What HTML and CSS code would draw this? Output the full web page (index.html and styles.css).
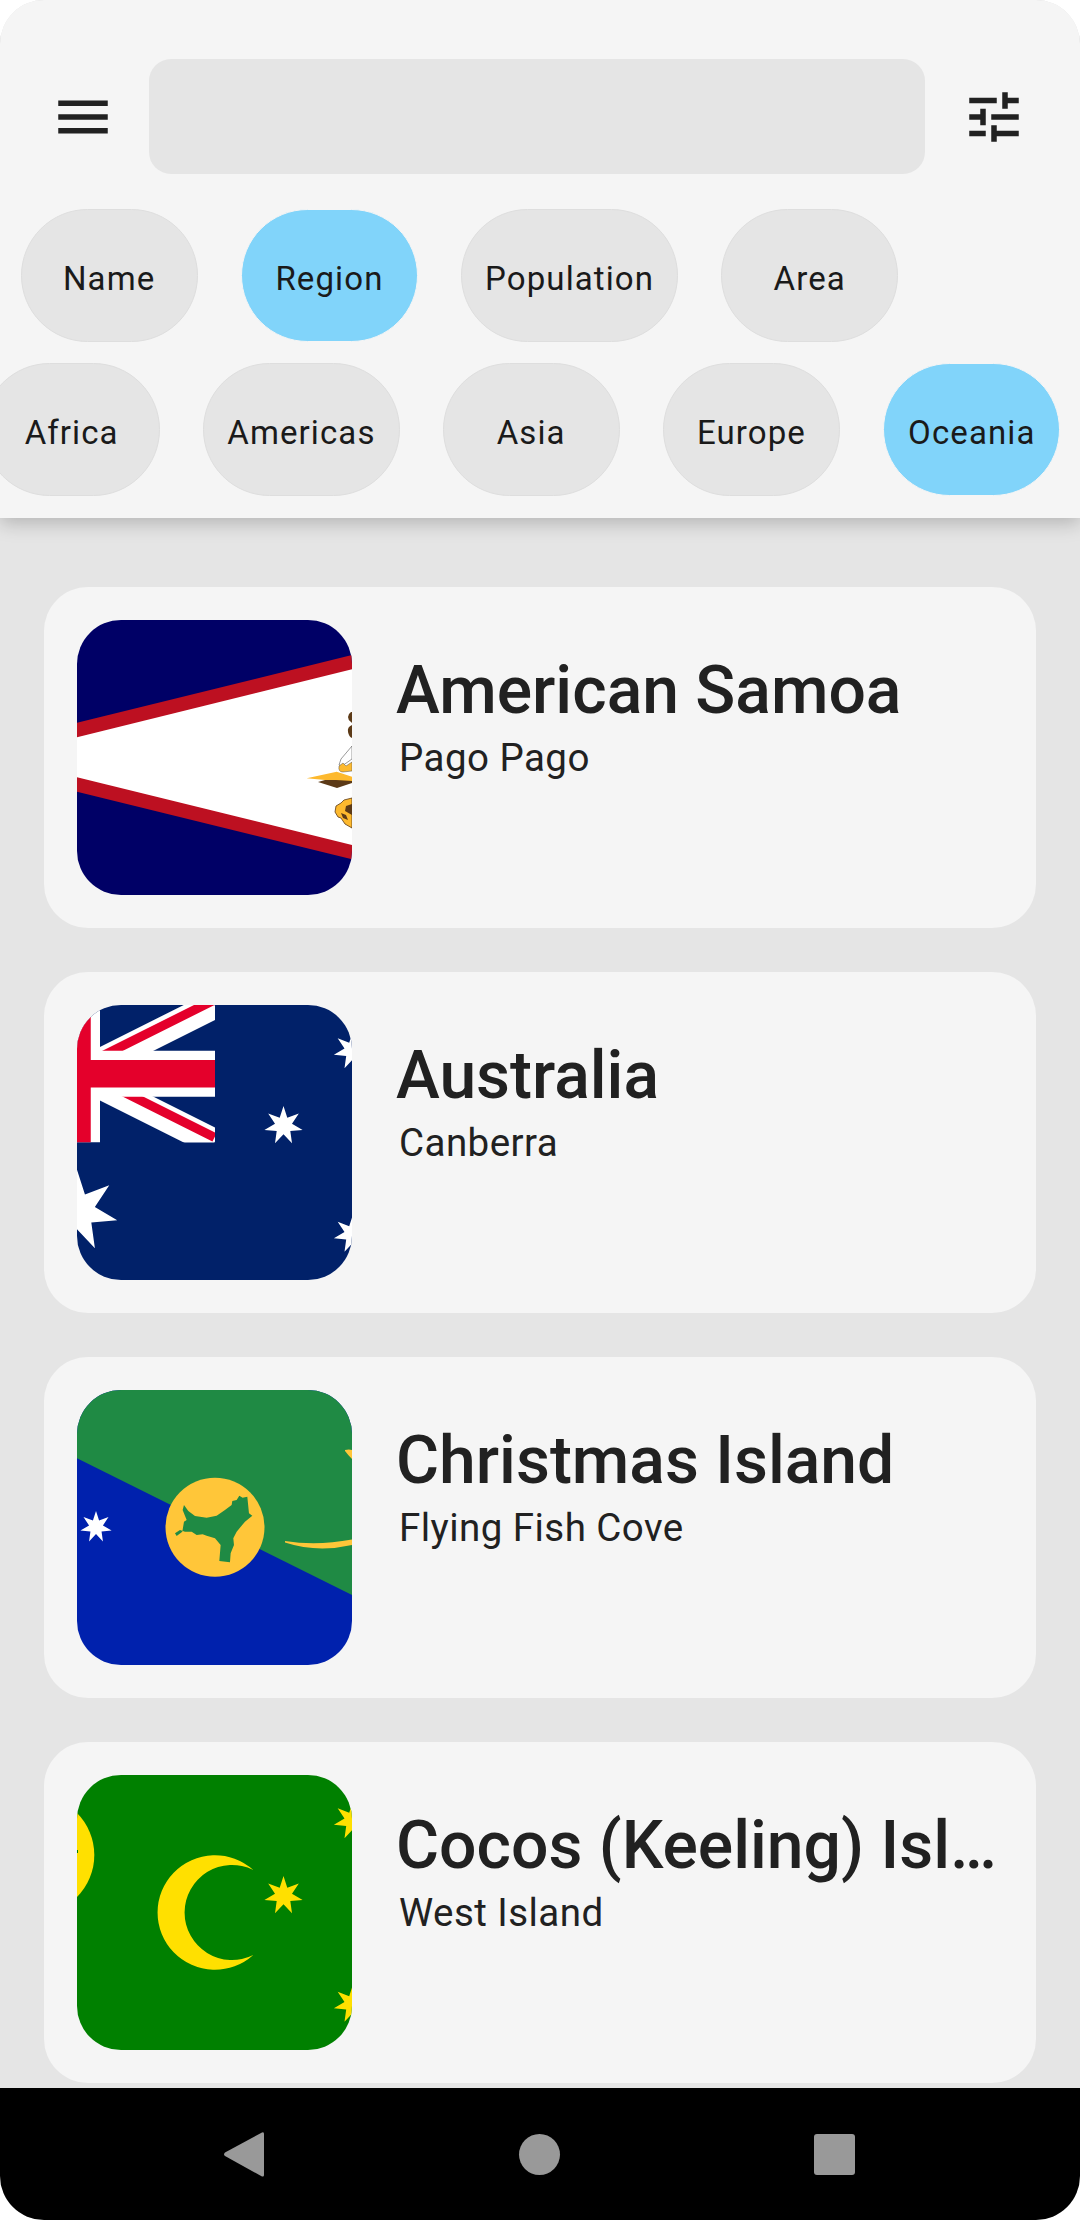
FILE: index.html
```html
<!DOCTYPE html>
<html lang="en">
<head>
    <meta charset="UTF-8">
    <meta name="viewport" content="width=device-width, initial-scale=1.0">
    <title>Countries</title>
    <link rel="stylesheet" href="styles.css">
</head>
<body>
    <svg class="svg-defs">
        <defs>
            <polygon id="star7" points="0,-100 19.3,-40 78.2,-62.3 43.3,-9.9 97.5,22.3 34.7,27.7 43.4,90.1 0,44.4 -43.4,90.1 -34.7,27.7 -97.5,22.3 -43.3,-9.9 -78.2,-62.3 -19.3,-40"/>
        </defs>
    </svg>

    <div class="screen">
        <header class="top">
            <div class="search-row">
                <button class="icon-btn">
                    <svg viewBox="0 0 24 24"><path d="M3 18h18v-2H3v2zm0-5h18v-2H3v2zm0-7v2h18V6H3z"/></svg>
                </button>
                <div class="search"></div>
                <button class="icon-btn">
                    <svg viewBox="0 0 24 24"><path d="M3 17v2h6v-2H3zM3 5v2h10V5H3zm10 16v-2h8v-2h-8v-2h-2v6h2zM7 9v2H3v2h4v2h2V9H7zm14 4v-2H11v2h10zm-6-4h2V7h4V5h-4V3h-2v6z"/></svg>
                </button>
            </div>
            <div class="chips chips-sort">
                <span class="chip">Name</span>
                <span class="chip selected">Region</span>
                <span class="chip">Population</span>
                <span class="chip">Area</span>
            </div>
            <div class="chips chips-region">
                <span class="chip">Africa</span>
                <span class="chip">Americas</span>
                <span class="chip">Asia</span>
                <span class="chip">Europe</span>
                <span class="chip selected">Oceania</span>
            </div>
        </header>

        <main class="list">
            <article class="card">
                <svg class="flag" viewBox="0 0 275 275">
                    <rect width="275" height="275" fill="#006"/>
                    <polygon points="0,102.7 275,35 275,239.3 0,171.7" fill="#bd1021"/>
                    <polygon points="0,117.3 275,49.3 275,225 0,157.3" fill="#fff"/>
                    <path d="M274 92q-3 2-3 5t3 5l1 1v-11zM275 105q-5 2-4 7t4 6z" fill="#5c3a17"/>
                    <path d="M275 126l-11 13-2 6 3 1 10-7z" fill="#fff" stroke="#555" stroke-width=".6"/>
                    <path d="M262 146l4-3 3 3 6-4v9l-9 1q-5 0-4-6z" fill="#fdb92e" stroke="#555" stroke-width=".5"/>
                    <polygon points="241,162 260,168 275,163 275,158 255,158" fill="#5c3a17"/>
                    <polygon points="229.7,158.3 259.7,151.7 275,156.7 275,161 259,160 248,160" fill="#fdb92e"/>
                    <path d="M275 178l-8 2-3 3-5 3-1 6 3 5 3 1 4 6 7 4z" fill="#fdb92e" stroke="#5c3a17" stroke-width=".8"/>
                    <path d="M275 184l-6 2-1 5 7 4zM264 193l5 2 2 5-5-2z" fill="#5c3a17"/>
                </svg>
                <div class="info">
                    <h2 class="name">American Samoa</h2>
                    <p class="capital">Pago Pago</p>
                </div>
            </article>

            <article class="card">
                <svg class="flag" viewBox="0 0 275 275">
                    <rect width="275" height="275" fill="#012169"/>
                    <svg width="138" height="137.5" viewBox="0 0 138 137.5">
                        <path d="M0 68.75L137.5 0M0 68.75L137.5 137.5" stroke="#fff" stroke-width="27.5"/>
                        <path d="M0 63.63L137.5 -5.12M0 63.63L137.5 132.38" stroke="#e4002b" stroke-width="9.17"/>
                        <path d="M0 0V137.5M0 68.75H138" stroke="#fff" stroke-width="46"/>
                        <path d="M0 0V137.5M0 68.75H138" stroke="#e4002b" stroke-width="27.5"/>
                    </svg>
                    <g fill="#fff">
                        <use href="#star7" transform="translate(0 206) scale(.4125)"/>
                        <use href="#star7" transform="translate(206.5 120.6) scale(.196)"/>
                        <use href="#star7" transform="translate(276 45.5) scale(.196)"/>
                        <use href="#star7" transform="translate(276 229) scale(.196)"/>
                    </g>
                </svg>
                <div class="info">
                    <h2 class="name">Australia</h2>
                    <p class="capital">Canberra</p>
                </div>
            </article>

            <article class="card">
                <svg class="flag" viewBox="0 0 275 275">
                    <rect width="275" height="275" fill="#0021ad"/>
                    <polygon points="0,68.3 0,0 275,0 275,205" fill="#1f8a44"/>
                    <circle cx="138" cy="137.3" r="49.5" fill="#ffc639"/>
                    <g transform="translate(-17 -15) scale(.3333)">
                        <polygon fill="#1f8a44" points="345,475 350,483 367,470 372,440 380,435 368,405 372,390 385,408 405,423 440,428 470,422 495,405 515,390 517,378 530,375 538,362 548,368 562,365 567,415 577,422 555,440 530,470 520,490 522,510 512,535 510,562 478,558 482,510 465,490 440,482 428,478 410,480 395,470 375,470 360,465"/>
                    </g>
                    <use href="#star7" transform="translate(19 137) scale(.16)" fill="#fff"/>
                    <path d="M208 151Q240 156 275 149.5V155Q240 163 208 152.5ZM268 60Q272 59 275 60V69Q271 65 268 61Z" fill="#ffc639"/>
                </svg>
                <div class="info">
                    <h2 class="name">Christmas Island</h2>
                    <p class="capital">Flying Fish Cove</p>
                </div>
            </article>

            <article class="card">
                <svg class="flag" viewBox="0 0 275 275">
                    <rect width="275" height="275" fill="#008000"/>
                    <g fill="#ffe000">
                        <circle cx="-42.3" cy="80" r="59.6"/>
                        <path d="M176.3 95A57.3 57.3 0 1 0 176.3 180A47.5 47.5 0 1 1 176.3 95Z"/>
                        <use href="#star7" transform="translate(206.5 120.6) scale(.196)"/>
                        <use href="#star7" transform="translate(276 45.5) scale(.196)"/>
                        <use href="#star7" transform="translate(276 229) scale(.196)"/>
                    </g>
                    <rect y="75" width="1" height="3" fill="#008000"/>
                </svg>
                <div class="info">
                    <h2 class="name">Cocos (Keeling) Islands</h2>
                    <p class="capital">West Island</p>
                </div>
            </article>
        </main>

        <nav class="navbar">
            <svg class="nav-icon" viewBox="0 0 40 45"><path d="M38 .5q2-1 2 1.500v41q0 2-2 1.500L1 24q-2-1.500 0-3.500z"/></svg>
            <span class="nav-home"></span>
            <span class="nav-recent"></span>
        </nav>
    </div>
</body>
</html>
```

FILE: styles.css
```css
* {
    box-sizing: border-box;
}

html, body {
    margin: 0;
    padding: 0;
    background: #fff;
}

.svg-defs {
    display: none;
}

.screen {
    width: 1080px;
    height: 2220px;
    display: flex;
    flex-direction: column;
    overflow: hidden;
    border-radius: 44px;
    background: #e5e5e5;
    font-family: Roboto, "Liberation Sans", sans-serif;
}

/* top part: search and filter chips */
.top {
    height: 518px;
    flex: none;
    padding-top: 59px;
    background: #f5f5f5;
    box-shadow: 0 5px 18px rgba(0, 0, 0, 0.22);
    position: relative;
    z-index: 1;
}

.search-row {
    display: flex;
    align-items: center;
    justify-content: space-between;
    padding: 0 53px 0 50px;
}

.icon-btn {
    width: 66px;
    height: 66px;
    padding: 0;
    border: none;
    background: none;
    flex: none;
}

.icon-btn svg {
    display: block;
    width: 66px;
    height: 66px;
    fill: #212121;
}

.search {
    width: 776px;
    height: 115px;
    margin-left: -3px;
    border-radius: 22px;
    background: #e5e5e5;
}

.chips {
    display: flex;
    gap: 43px;
    white-space: nowrap;
}

.chips-sort {
    margin-top: 35px;
    padding-left: 20.5px;
}

.chips-region {
    margin-top: 21px;
    margin-left: -17px;
}

.chip {
    min-width: 177.3px;
    height: 133px;
    padding: 6px 23px 0;
    border: 1px solid #dedede;
    border-radius: 67px;
    display: flex;
    align-items: center;
    justify-content: center;
    flex: none;
    font-size: 33px;
    letter-spacing: 1.1px;
    color: #1a1a1a;
    background: #e5e5e5;
}

.chip.selected {
    background: #81d4fa;
    border-color: #f5f5f5;
}

/* country cards */
.list {
    flex: 1;
    min-height: 0;
    display: flex;
    flex-direction: column;
    gap: 44px;
    padding: 69px 44px 0;
}

.card {
    height: 341px;
    flex: none;
    display: flex;
    gap: 44px;
    padding: 33px;
    border-radius: 44px;
    background: #f5f5f5;
}

.flag {
    width: 275px;
    height: 275px;
    flex: none;
    border-radius: 44px;
}

.info {
    flex: 1;
    min-width: 0;
    padding-top: 32px;
}

.name {
    margin: 0;
    font-size: 66px;
    font-weight: 500;
    line-height: 78px;
    color: #212121;
    white-space: nowrap;
    overflow: hidden;
    text-overflow: ellipsis;
}

.capital {
    margin: 5px 0 0 3px;
    font-size: 38.5px;
    letter-spacing: 0.45px;
    line-height: 46px;
    color: #212121;
}

/* android buttons */
.navbar {
    height: 132px;
    flex: none;
    display: flex;
    align-items: center;
    background: #000;
    padding: 0 225px 0 224px;
    justify-content: space-between;
}

.nav-icon {
    width: 40px;
    height: 45px;
    fill: #999;
}

.nav-home {
    width: 41px;
    height: 41px;
    border-radius: 50%;
    background: #999;
}

.nav-recent {
    width: 41px;
    height: 41px;
    border-radius: 3px;
    background: #999;
}
```
